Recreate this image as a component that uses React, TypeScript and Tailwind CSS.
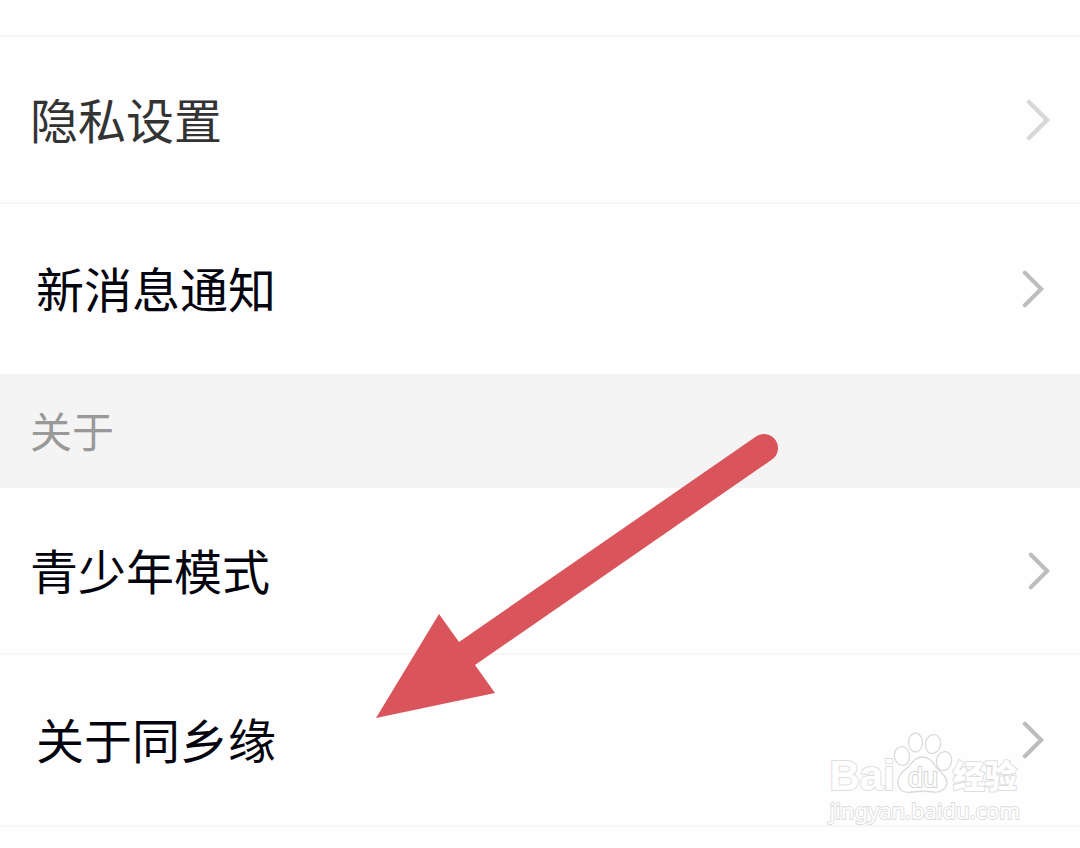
import { clsx } from "clsx";

type Row = {
  label: string;
  inset?: boolean;
  muted?: boolean;
  divider?: boolean;
};

const generalRows: Row[] = [
  { label: "隐私设置", muted: true, divider: true },
  { label: "新消息通知", inset: true },
];

const aboutRows: Row[] = [
  { label: "青少年模式", divider: true },
  { label: "关于同乡缘", inset: true, divider: true },
];

function Chevron({ className }: { className: string }) {
  return (
    <svg viewBox="0 0 24 42" className={clsx("shrink-0", className)} fill="none" aria-hidden="true">
      <path d="M3 3 L21 21 L3 39" stroke="currentColor" strokeWidth="4.5" strokeLinecap="round" />
    </svg>
  );
}

function SettingsRow({ row }: { row: Row }) {
  return (
    <li className={clsx(row.divider && "border-b-2 border-[#f7f7f7]")}>
      <button
        type="button"
        className={clsx(
          "flex w-full items-center justify-between text-left",
          row.inset ? "h-[170px] pl-9 pr-9" : "h-[165px] pl-[30px] pr-[30px]"
        )}
      >
        <span
          className={clsx("pb-1 text-5xl leading-[56px]", row.muted ? "text-[#333333]" : "text-[#05050f]")}
        >
          {row.label}
        </span>
        <Chevron
          className={row.muted ? "h-[42px] w-6 text-[#d8d8d8]" : "h-[38px] w-[22px] text-[#bdbdbd]"}
        />
      </button>
    </li>
  );
}

function PointerArrow() {
  return (
    <svg
      viewBox="376 434 404 286"
      className="pointer-events-none absolute left-[376px] top-[434px] h-[286px] w-[404px]"
      aria-hidden="true"
    >
      <path
        d="M376 718 L439 614 L459 642 L756 436.500 A14 14 0 0 1 772 459.500 L475 665 L495 693 Z"
        fill="#da555b"
      />
    </svg>
  );
}

function Watermark() {
  const outline = "[-webkit-text-stroke:2px_#dedede] [paint-order:stroke_fill]";

  return (
    <div className="pointer-events-none absolute right-[60px] top-[730px] text-white">
      <div className="flex h-[64px] items-end">
        <span className={clsx("font-['Liberation_Sans'] text-[42px] font-bold leading-9", outline)}>
          Bai
        </span>
        <svg
          viewBox="2 0 58 66"
          className="h-[66px] w-[58px] overflow-visible"
          fill="#fff"
          stroke="#dadada"
          strokeWidth="1.3"
          aria-label="du"
        >
          <ellipse cx="9" cy="28" rx="7.500" ry="9.500" transform="rotate(-8 9 28)" />
          <ellipse cx="22.500" cy="14.500" rx="7" ry="9.500" />
          <ellipse cx="40" cy="16" rx="7.500" ry="9.500" transform="rotate(12 40 16)" />
          <ellipse cx="51" cy="33" rx="7.500" ry="9.500" transform="rotate(12 51 33)" />
          <path d="M29.500 29 C22 29 19 35 14 40 C8 45 4 49 5 56 C6 63 12 65 19 64 C26 63 33 63 40 64 C48 65 53 61 54 55 C54 48 48 45 43 39 C39 33 36 29 29.500 29 Z" />
          <text
            x="30"
            y="59"
            textAnchor="middle"
            strokeWidth="2"
            stroke="#d4d4d4"
            className="font-['Liberation_Sans'] text-[27px] [paint-order:stroke_fill]"
          >
            du
          </text>
        </svg>
        <span className={clsx("text-[32px] font-black leading-10", outline)}>经验</span>
      </div>
      <p className={clsx("pt-[2px] font-['Noto_Sans'] text-[22px] leading-7", outline)}>jingyan.baidu.com</p>
    </div>
  );
}

export default function App() {
  return (
    <main className="relative min-h-screen overflow-hidden bg-[#fefefe] font-['Noto_Sans_CJK_SC',sans-serif]">
      <div className="h-[37px] border-b-2 border-[#f7f7f7]" />

      <ul>
        {generalRows.map((row) => (
          <SettingsRow key={row.label} row={row} />
        ))}
      </ul>

      <section>
        <h2 className="flex h-[114px] items-center bg-[#f4f4f4] pb-[2px] pl-[30px] text-[42px] leading-[56px] text-[#999999]">
          关于
        </h2>
        <ul>
          {aboutRows.map((row) => (
            <SettingsRow key={row.label} row={row} />
          ))}
        </ul>
      </section>

      <Watermark />
      <PointerArrow />
    </main>
  );
}
